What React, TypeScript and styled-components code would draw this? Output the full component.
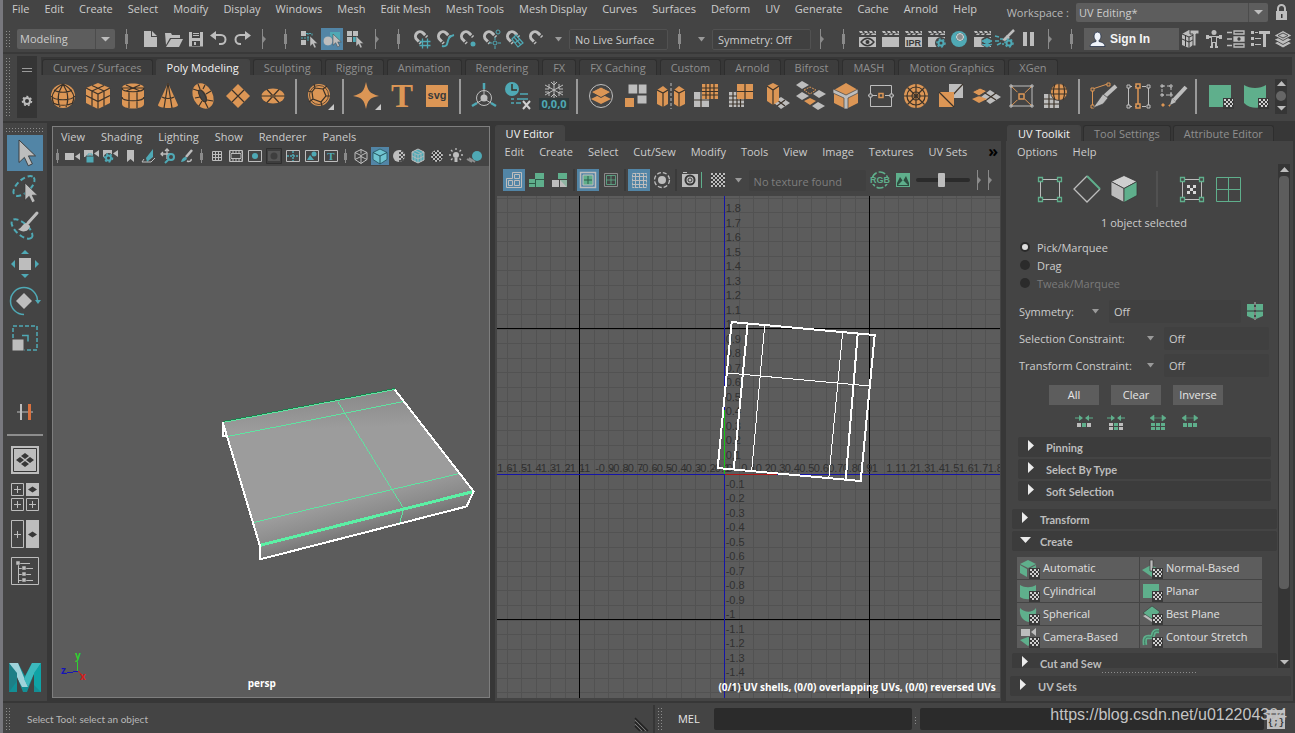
import React from "react";
import styled, { createGlobalStyle } from "styled-components";

/* ---------- palette ---------- */
const G = "#bdbdbd";
const T = "#4fa9b5";
const O = "#dc9655";
const N = "#5faf8c";
const D = "#373737";
const BG = "#444444";

const GlobalStyle = createGlobalStyle`
  * { box-sizing: border-box; }
  body {
    margin: 0;
    background: ${BG};
    color: #cccccc;
    font: 11px/16px "Open Sans", "Noto Sans", sans-serif;
    overflow: hidden;
  }
  button, input, select { font: inherit; color: inherit; }
`;

/* ---------- shared parts ---------- */
const App_ = styled.div`
  height: 100vh;
  min-height: 600px;
  display: flex;
  flex-direction: column;
  border-left: 3px solid #77777d;
`;

const dots = `
  repeating-linear-gradient(${BG} 0 2px, transparent 2px 3px),
  repeating-linear-gradient(90deg, #8c8c8c 0 1px, ${BG} 1px 3px)
`;

const Grip = styled.span<{ $w?: number; $h?: number }>`
  flex: none;
  width: ${(p) => p.$w ?? 4}px;
  height: ${(p) => p.$h ?? 20}px;
  margin: ${(p) => (p.$w ? "0" : "0 0 0 2px")};
  background: ${dots};
`;

const MenuList = styled.nav<{ $pad: number; $h: number; $gap: number }>`
  display: flex;
  align-items: center;
  gap: ${(p) => p.$gap}px;
  height: ${(p) => p.$h}px;
  flex: none;
  padding-left: ${(p) => p.$pad}px;
`;

const MenuButton = styled.button`
  border: 0;
  padding: 0;
  background: none;
  white-space: nowrap;
`;

const MoreButton = styled(MenuButton)`
  margin: 0 3px 2px auto;
  color: #000000;
  font: bold 16px/16px "Open Sans", sans-serif;
`;

const Tool = styled.button<{ $w?: number; $h?: number; $on?: boolean }>`
  flex: none;
  display: flex;
  align-items: center;
  justify-content: center;
  width: ${(p) => p.$w ?? 22}px;
  height: ${(p) => p.$h ?? 22}px;
  padding: 0;
  border: 0;
  background: ${(p) => (p.$on ? "#5285a6" : "none")};
`;

const Svg = styled.svg`
  display: block;
  flex: none;
  overflow: visible;
`;

const HandleBox = styled.span<{ $w: number }>`
  flex: none;
  display: flex;
  justify-content: center;
  width: ${(p) => p.$w}px;
`;

const Handle = ({ w = 22, s = 20 }: { w?: number; s?: number }) => (
  <HandleBox $w={w}>
    <Svg width="4" height={s} viewBox={`0 0 4 ${s}`} shapeRendering="crispEdges">
      <path d={`M1.500 0V${s}`} stroke="#8a8a8a" />
      <rect x="0" y={s / 4} width="3" height={s / 2} fill="#8a8a8a" />
    </Svg>
  </HandleBox>
);

const Collapse = ({ w = 20 }: { w?: number }) => (
  <Tool $w={w} aria-label="Collapse section">
    <Svg width="5" height="20" viewBox="0 0 5 20">
      <path d="M.5 0V20" stroke="#8a8a8a" />
      <path d="M0 6l4 4-4 5z" fill="#8a8a8a" />
    </Svg>
  </Tool>
);

const Caret = ({ w = 7, c = "#9a9a9a" }: { w?: number; c?: string }) => (
  <Svg width={w} height="5" viewBox="0 0 7 5" preserveAspectRatio="none">
    <path d="M0 0h7L3.500 4.500z" fill={c} />
  </Svg>
);

const SelectBox = styled.span<{ $grow?: boolean }>`
  display: grid;
  grid-template-columns: 1fr 20px;
  align-items: center;
  justify-items: center;
  width: ${(p) => (p.$grow ? 192 : 98)}px;
  height: ${(p) => (p.$grow ? 19 : 20)}px;
  background: #5d5d5d;
  border-radius: 2px;
  flex: none;
  select {
    grid-area: 1 / 1 / 2 / 3;
    justify-self: stretch;
    height: 100%;
    min-width: 0;
    appearance: none;
    border: 0;
    padding: 0 3px;
    background: none;
  }
  svg {
    grid-area: 1 / 2;
    pointer-events: none;
  }
  &::after {
    content: "";
    grid-area: 1 / 2;
    justify-self: start;
    width: 1px;
    height: 100%;
    background: #4c4c4c;
  }
`;

/* ---------- header ---------- */
const Header = styled.header`
  display: flex;
  justify-content: space-between;
  height: 25px;
  flex: none;
`;
const Workspace = styled.div`
  display: flex;
  align-items: center;
  gap: 7px;
  height: 22px;
  padding: 3px 7px 0 0;
  label { color: #b8b8b8; }
`;

/* ---------- status line ---------- */
const StatusLine = styled.div`
  display: flex;
  align-items: center;
  gap: 1px;
  height: 29px;
  flex: none;
  padding: 1px 3px 0 1px;
  border-bottom: 2px solid #393939;
  > ${SelectBox} { margin-left: 6px; }
`;
const LineField = styled.input`
  width: 99px;
  height: 21px;
  flex: none;
  padding: 0 5px;
  border: 1px solid #515151;
  border-radius: 2px;
  background: #404040;
`;
const SignIn = styled.button`
  display: flex;
  align-items: center;
  gap: 4px;
  width: 95px;
  height: 22px;
  flex: none;
  padding: 0 5px;
  border: 0;
  background: #5d5d5d;
  color: #f4f4f4;
  font: bold 12px "Liberation Sans", sans-serif;
`;
const Spacer = styled.span`flex: 1;`;

/* ---------- shelf ---------- */
const Shelf = styled.section`
  display: flex;
  height: 67px;
  flex: none;
  padding: 2px 3px 3px 1px;
  gap: 4px;
`;
const ShelfSide = styled.div`
  display: flex;
  flex-direction: column;
  align-items: center;
  justify-content: space-around;
  width: 20px;
  margin-left: 3px;
  background: #353535;
`;
const ShelfBody = styled.div`
  flex: 1;
  min-width: 0;
  padding-top: 1px;
`;
const TabBar = styled.div<{ $h: number; $pad: number; $gap?: number }>`
  display: flex;
  align-items: flex-end;
  gap: ${(p) => p.$gap ?? 2}px;
  height: ${(p) => p.$h}px;
  flex: none;
  padding-left: ${(p) => p.$pad}px;
  background: ${D};
`;
const Tab = styled.button<{ $on?: boolean }>`
  height: 16px;
  padding: 0 10px;
  border: 1px solid ${(p) => (p.$on ? BG : "#2e2e2e")};
  border-bottom: 0;
  border-radius: 3px 3px 0 0;
  background: ${(p) => (p.$on ? BG : "#3d3d3d")};
  color: ${(p) => (p.$on ? "#f2f2f2" : "#8f8f8f")};
  line-height: 15px;
  white-space: nowrap;
`;
const ShelfIcons = styled.div`
  display: flex;
  align-items: center;
  height: 42px;
  padding-left: 4px;
`;
const ShelfRule = styled.span`
  width: 2px;
  height: 35px;
  margin: 0 5px;
  flex: none;
  background: #9a9a9a;
`;
const ShelfScroll = styled.div`
  display: flex;
  flex-direction: column;
  align-items: center;
  justify-content: space-around;
  width: 12px;
  height: 35px;
  margin: 0 5px 0 auto;
  background: #363636;
`;

/* ---------- workspace body ---------- */
const Body = styled.main`
  flex: 1;
  min-height: 0;
  display: flex;
  gap: 5px;
  background: ${D};
  border-top: 2px solid ${D};
`;
const ToolBox = styled.aside`
  display: flex;
  flex-direction: column;
  align-items: center;
  gap: 1px;
  width: 44px;
  padding-top: 3px;
  flex: none;
  background: ${BG};
`;
const ToolRule = styled.hr`
  width: 36px;
  height: 2px;
  margin: 3px 0 5px;
  border: 0;
  background: #8d8d8d;
`;
const Slot = styled.div`height: 36px; flex: none;`;
const Viewport = styled.section`
  flex: 437;
  min-width: 0;
  display: flex;
  flex-direction: column;
  margin: 3px 0;
  border: 1px solid #7e7e7e;
  background: ${BG};
`;
const ViewTools = styled.div`
  display: flex;
  align-items: center;
  gap: 1px;
  height: 20px;
  flex: none;
`;
const Scene = styled.svg`
  display: block;
  flex: 1;
  width: 100%;
  min-height: 0;
  background: #5c5c5c;
`;
const Panel = styled.section<{ $f: number }>`
  flex: ${(p) => p.$f};
  min-width: 0;
  display: flex;
  flex-direction: column;
  margin-top: 2px;
  background: ${BG};
`;
const UvFoot = styled.div`
  flex: 1;
  min-height: 0;
  display: flex;
  padding: 0 1px 3px 2px;
`;
const UvTools = styled.div`
  display: flex;
  align-items: center;
  gap: 1px;
  height: 34px;
  flex: none;
  padding: 2px 6px 0 8px;
`;
const Rule = styled.span`
  width: 2px;
  height: 22px;
  margin: 0 1px;
  flex: none;
  background: #3a3a3a;
`;
const TextureField = styled.input`
  flex: 1;
  min-width: 60px;
  height: 21px;
  padding: 2px 5px 0;
  margin-right: 2px;
  border: 0;
  border-radius: 2px;
  background: #404040;
  &::placeholder { color: #7e7e7e; opacity: 1; }
`;
const Slider = styled.input`
  width: 54px;
  height: 16px;
  margin: 0 3px 0 1px;
  flex: none;
  appearance: none;
  background: none;
  &::-webkit-slider-runnable-track { height: 4px; border-radius: 2px; background: #2b2b2b; }
  &::-webkit-slider-thumb {
    appearance: none;
    width: 7px;
    height: 14px;
    margin-top: -5px;
    border-radius: 1px;
    background: ${G};
  }
`;

/* ---------- UV toolkit ---------- */
const Kit = styled(Panel)`
  flex: none;
  width: 287px;
  margin-right: 2px;
`;
const KitBody = styled.div`
  flex: 1;
  min-height: 0;
  display: flex;
`;
const KitScroll = styled.div`
  flex: 1;
  min-width: 0;
  overflow: hidden;
  padding-left: 6px;
`;
const ModeRow = styled.div`
  display: flex;
  align-items: center;
  height: 52px;
  padding: 2px 0 0 19px;
  i { width: 2px; height: 36px; margin: 0 15px 0 14px; background: #515151; }
`;
const SelInfo = styled.p`
  margin: 1px 2px 8px 0;
  text-align: center;
`;
const Radio = styled.label<{ $off?: boolean }>`
  display: flex;
  align-items: center;
  gap: 7px;
  height: 18px;
  padding-left: 8px;
  color: ${(p) => (p.$off ? "#7a7a7a" : "inherit")};
  input {
    appearance: none;
    width: 10px;
    height: 10px;
    margin: 0 0 2px;
    border-radius: 5px;
    background: #2b2b2b;
  }
  input:checked { border: 2px solid #2b2b2b; background: #dddddd; }
`;
const Constraints = styled.div`
  display: flex;
  flex-direction: column;
  gap: 4px;
  padding: 7px 9px 0 7px;
`;
const FieldRow = styled.div`
  display: flex;
  align-items: center;
  height: 23px;
  input {
    flex: 1;
    min-width: 0;
    height: 23px;
    margin-left: 8px;
    padding: 0 5px;
    border: 0;
    border-radius: 2px;
    background: #404040;
  }
`;
const FieldLabel = styled.label<{ $w: number }>`width: ${(p) => p.$w}px;`;
const PushRow = styled.div`
  display: flex;
  gap: 12px;
  padding: 8px 0 0 37px;
`;
const Push = styled.button`
  width: 50px;
  height: 20px;
  padding: 0;
  border: 0;
  background: #5d5d5d;
  color: #e6e6e6;
`;
const GrowRow = styled.div`
  display: flex;
  gap: 10px;
  padding: 10px 0 6px 61px;
  i { width: 0; }
`;
const Fold = styled.button<{ $sub?: boolean; $wide?: boolean }>`
  display: flex;
  align-items: center;
  gap: 9px;
  width: calc(100% - ${(p) => (p.$sub ? 13 : p.$wide ? 6 : 1)}px);
  height: 20px;
  margin: 0 0 2px ${(p) => (p.$sub ? 6 : p.$wide ? 4 : 0)}px;
  padding: 0 0 0 8px;
  border: 0;
  border-radius: 2px;
  background: #3c3c3c;
  font: bold 11px/16px Lato, sans-serif;
  color: #bdbdbd;
  flex: none;
  svg { margin-bottom: 4px; }
  span { padding-top: 2px; }
`;
const SubFolds = styled.div`padding-bottom: 6px;`;
const CreateGrid = styled.div`
  display: grid;
  grid-template-columns: 1fr 1fr;
  gap: 1px;
  padding: 4px 16px 5px 5px;
`;
const CreateButton = styled.button`
  display: flex;
  align-items: center;
  gap: 4px;
  height: 22px;
  padding: 0 2px;
  border: 0;
  background: #5d5d5d;
  color: #e0e0e0;
  white-space: nowrap;
`;
const ScrollTrack = styled.div`
  display: flex;
  flex-direction: column;
  align-items: center;
  width: 12px;
  margin: 2px 3px 0 0;
  padding: 3px 0;
  gap: 4px;
  background: #353535;
`;
const ScrollThumb = styled.span`
  width: 10px;
  flex: 425;
  border-radius: 4px;
  background: #5d5d5d;
`;
const ScrollRest = styled.span`flex: 65;`;
const DotRow = styled.div`
  width: 96px;
  height: 3px;
  margin: 2px 0 3px 96px;
  flex: none;
  background: ${dots};
`;
const FoldFoot = styled.div`height: 3px; flex: none;`;

/* ---------- footer ---------- */
const Footer = styled.footer`
  position: relative;
  display: flex;
  align-items: center;
  height: 32px;
  flex: none;
  padding: 2px 7px 0 1px;
  border-top: 2px solid ${D};
`;
const HelpLine = styled.div`
  flex: 648;
  display: flex;
  align-items: center;
  gap: 17px;
  height: 28px;
  margin-right: 1px;
  padding-right: 5px;
  border-right: 2px solid #363636;
  font: 10px/14px Lato, sans-serif;
  color: #b8b8b8;
`;
const CommandLine = styled.div`
  flex: 636;
  display: flex;
  align-items: center;
`;
const MelButton = styled.button`
  padding: 0;
  margin: 0 14px 0 16px;
  border: 0;
  background: none;
  color: #e8e8e8;
`;
const Command = styled.input<{ $f: number }>`
  flex: ${(p) => p.$f};
  min-width: 0;
  height: 22px;
  border: 0;
  border-radius: 2px;
  background: #2b2b2b;
`;
const CommandGap = styled.span`
  width: 1px;
  height: 9px;
  margin: 0 4px 0 3px;
  background: ${dots};
`;
const Watermark = styled.a`
  position: absolute;
  right: 8px;
  top: 2px;
  font: 16px/20px "Liberation Sans", sans-serif;
  color: #c4c4c4;
  text-decoration: none;
`;

/* ---------- icon pieces ---------- */
const Check = ({ x, y }: { x: number; y: number }) => (
  <g transform={`translate(${x} ${y})`} shapeRendering="crispEdges">
    <path d="M-1-1h11v11H-1z" fill="#3a3a3a" />
    <path d="M0 0h2v2H0zM4 0h2v2H4zM2 2h2v2H2zM6 2h2v2H6zM0 4h2v2H0zM4 4h2v2H4zM2 6h2v2H2zM6 6h2v2H6zM8 0h1v2H8zM8 4h1v2H8z" fill="#d0d0d0" />
  </g>
);
const Cursor = ({ x, y, s = 1 }: { x: number; y: number; s?: number }) => (
  <path
    transform={`translate(${x} ${y}) scale(${s})`}
    d="M0 0v15l3.600-3.400 2.600 5.600 2.700-1.300-2.600-5.300H11z"
    fill={G}
    stroke={D}
    strokeWidth=".6"
  />
);
const Corner = () => <path d="M30 24v6h-6z" fill="#c8c8c8" />;
const Magnet = () => (
  <g transform="rotate(-45 9 9)" fill="none">
    <path d="M5 14V8.500a4.500 4.500 0 0 1 9 0V14" stroke={G} strokeWidth="3" />
    <path d="M3 12h4M12 12h4" stroke={BG} strokeWidth="1.200" />
  </g>
);
const Clap = () => (
  <g>
    <path d="M3 9h17v10H3z" fill={G} />
    <path d="M3 3h3l1 2H4zM8 3h3l1 2H9zM13 3h3l1 2h-3zM18 3h2v2h-1zM3 7h2l1-1.500h3L8 7zM10 7l1-1.500h3L13 7zM15 7l1-1.500h4V7z" fill={G} />
  </g>
);
const Gear = ({ x, y, r = 3.5, c = T }: { x: number; y: number; r?: number; c?: string }) => (
  <g transform={`translate(${x} ${y})`} fill="none" stroke={c}>
    <circle r={r} strokeWidth="2" />
    <circle r={r + 1.5} strokeWidth="1.500" strokeDasharray="2 2" />
  </g>
);
const CamShape = ({ y = 5 }: { y?: number }) => (
  <path d={`M1 ${y}h9v7H1zM11 ${y + 3.5}l5-3.500v7z`} fill={G} />
);

/* ---------- status line drawings, 22 x 22 ---------- */
const st: Record<string, React.ReactNode> = {
  file: <path d="M5 3h7v6h6v10H5zM13 3l5 5h-5z" fill={G} />,
  open: <path d="M3 5h6l1 2h8v3H8l-4 7zM9 11h12l-4 8H4z" fill={G} />,
  save: (
    <g>
      <path d="M4 4h14v14.500H4z" fill={G} />
      <path d="M7 4h8v6H7zM7 13h8v5H7z" fill={BG} />
      <path d="M8 5h6v1H8zM8 7h6v1H8zM9 14h2v3H9z" fill={G} />
    </g>
  ),
  undo: <path d="M8 3v3h5a5.500 5.500 0 0 1 0 11h-2v-2h2a3.500 3.500 0 0 0 0-7H8v4L2 7.500z" fill={G} />,
  redo: <path d="M14 3v3H9a5.500 5.500 0 0 0 0 11h1v-2H9a3.500 3.500 0 0 1 0-7h5v4l6-4.500z" fill={G} />,
  selH: (
    <g>
      <path d="M3 3h5v5H3zM3 12h5v5H3z" fill={G} />
      <path d="M8 5.500h6v3M10 5v9M3 10h10" fill="none" stroke={T} strokeDasharray="2 1" />
      <Cursor x={12} y={8} s={0.7} />
    </g>
  ),
  selO: (
    <g>
      <path d="M9 4h10v9H9z" fill={T} />
      <circle cx="7" cy="13" r="5" fill={G} stroke="#5285a6" />
      <Cursor x={12} y={6} s={0.75} />
    </g>
  ),
  selC: (
    <g>
      <path d="M3 3h5v5H3zM9 3h5v5H9zM3 9h5v5H3z" fill={G} />
      <path d="M9 9h5v5H9z" fill={T} />
      <Cursor x={12} y={8} s={0.7} />
    </g>
  ),
  magGrid: <g><Magnet /><path d="M8.500 13.500h11M8.500 17.500h11M11.500 10.500v10M16.500 10.500v10" stroke={T} strokeWidth="1.300" /></g>,
  magCurve: <g><Magnet /><path d="M8 18c9 2 2-9 12-11" fill="none" stroke={T} strokeWidth="2" /></g>,
  magPoint: <g><Magnet /><circle cx="16" cy="16" r="2.500" fill={T} /></g>,
  magProj: <g><Magnet /><circle cx="18" cy="4" r="2" fill="none" stroke={T} /><circle cx="15" cy="15" r="2" fill="none" stroke={T} /><path d="M15 9v3M15 18v3M9 15h3M18 15h3" stroke={T} /></g>,
  magPlane: <g><Magnet /><path d="M9 11l4-4 7 8-5 4zM11 9l7 8M12 15l5-4" fill="none" stroke={T} strokeWidth="1.200" /></g>,
  magLive: <Magnet />,
  rView: (
    <g>
      <Clap />
      <path d="M5 14c4-5 9-5 13 0-4 5-9 5-13 0z" fill={G} stroke={D} strokeWidth="1.300" />
      <circle cx="11.500" cy="14" r="2" fill={D} />
    </g>
  ),
  rFrame: <Clap />,
  rIpr: (
    <g>
      <Clap />
      <text x="11.500" y="18" textAnchor="middle" fontFamily="Liberation Sans" fontWeight="700" fontSize="9" fill={D}>IPR</text>
    </g>
  ),
  rSet: <g><Clap /><circle cx="16" cy="15" r="6" fill={BG} /><Gear x={16} y={15} r={2.5} /></g>,
  rBall: (
    <g>
      <circle cx="11" cy="11" r="8" fill={T} />
      <circle cx="12" cy="9" r="4" fill={BG} />
      <circle cx="12" cy="9" r="3.500" fill="#8d8d8d" stroke="#d5e6e8" strokeWidth="1" />
    </g>
  ),
  rLayer: <g><Clap /><path d="M15.500 8l6 3v6l-6 3-5-3v-6z" fill={BG} /><path d="M11 13l5-2.500 5 2.500-5 3zM11 16l5 3 5-3" fill={T} stroke={T} /></g>,
  rLight: (
    <g>
      <path d="M20 2l-7 7" stroke={G} strokeWidth="2.500" />
      <path d="M13 7l3 3-5 3-3-1z" fill={G} />
      <path d="M1 8l4 1M1 13h4M6 11h3M3 17l4-2M8 16h2" stroke={T} strokeWidth="1.500" />
      <Gear x={15} y={15} r={2.5} />
    </g>
  ),
  pause: <path d="M6 4h4v14H6zM13 4h4v14h-4z" fill={G} />,
  cubeTool: (
    <g>
      <path d="M2 6l7-4 8 1v3l-4 1v10l-4 3-7-3z" fill={G} />
      <path d="M2 6l7 3 7-3M9 9v11M2 11l7 3 4-2M5.500 7.500v11" fill="none" stroke={D} />
      <path d="M10 2h9v4h-3v12h-3V6h-3z" fill={G} stroke={BG} />
    </g>
  ),
  human: (
    <g>
      <circle cx="11" cy="4.500" r="2.500" fill={G} />
      <path d="M3 9h16M9 9v11M13 9v11" stroke={G} strokeWidth="2" />
      <path d="M3 7h3v4H3zM16 7h3v4h-3zM7 18h3v2H7zM12 18h3v2h-3z" fill={G} />
      <path d="M8.500 8.500h5v6h-5z" fill={BG} stroke={G} />
    </g>
  ),
  attr: (
    <g fill="none" stroke={G} strokeWidth="1.300">
      <path d="M8 3h10v3H8zM8 16h10v3H8z" />
      <path d="M8 9h10v4H8z" fill={G} />
      <path d="M1 4.500h5M1 11h5M1 17.500h5" />
      <circle cx="13" cy="11" r="1" stroke={D} />
    </g>
  ),
  toolS: (
    <g>
      <path d="M10 3h11v3h-4v13h-3V6h-4z" fill={G} />
      <path d="M2 3h3v3H2zM2 9h3v3H2zM2 15h3v3H2z" fill={G} />
      <path d="M6 10.500h6M6 16.500h6M6 4.500h3" stroke={G} />
    </g>
  ),
  layers: (
    <g fill={G} stroke={D} strokeWidth=".8">
      <path d="M2 15l9-4 9 4-9 5z" />
      <path d="M2 11.500l9-4 9 4-9 5z" />
      <path d="M2 7.500l9-5 9 5-9 5z" />
      <path d="M6 7.500l5-2.500 5 2.500-5 2.500z" fill="none" />
    </g>
  ),
};

/* ---------- shelf drawings, 32 x 32 ---------- */
const dk = { stroke: "#3b3229", strokeWidth: 1.2, fill: "none" };
const shelf: Record<string, React.ReactNode> = {
  sphere: <g><circle cx="16" cy="16" r="12" fill={O} /><path d="M7 10c4 3 14 3 18 0M4 16c4 5 20 5 24 0M6 23c5 3 15 3 20 0M16 4c-5 3-8 6-9 8-3 4-2 8 0 12M16 4c5 3 8 6 9 8 3 4 2 8 0 12M12 12c-1 5-1 11 1 15M20 12c1 5 1 11-1 15M16 4l-4 8M16 4l4 8" {...dk} /></g>,
  cube: <g><path d="M16 3l12 5v15l-12 6-12-6V8z" fill={O} /><path d="M4 8l12 6 12-6M16 14v15M10 11v15M22 11v15M4 15.500l12 6 12-6M10 5.500l12 5.500M22 5.500L10 11" {...dk} /></g>,
  cylinder: <g><path d="M5 8c0-6 22-6 22 0v16c0 6-22 6-22 0z" fill={O} /><path d="M5 8c0 5 22 5 22 0M5 17c0 5 22 5 22 0M12 12v16M20 12v16M9 5l14 6M23 5L9 11M5 8h22" {...dk} /></g>,
  cone: <g><path d="M16 3l10 22c0 4-20 4-20 0z" fill={O} /><path d="M16 3l-4 25M16 3l4 25M10 17c3 2 9 2 12 0" {...dk} /></g>,
  torus: <g><ellipse cx="16" cy="16" rx="6.500" ry="10" transform="rotate(-28 16 16)" fill="none" stroke={O} strokeWidth="6.500" /><ellipse cx="15.500" cy="15.500" rx="2.500" ry="6.500" transform="rotate(-28 16 16)" fill={BG} stroke="#3b3229" /><path d="M11 4l2 5M6 9l6 2M8 18l5-1M12 26l3-5M21 28l-3-6M26 21l-6-1M24 11l-5 3M18 5l-2 4" {...dk} /></g>,
  plane: <g><path d="M16 4l12 12-12 12L4 16z" fill={O} /><path d="M10 10l12 12M22 10L10 22" {...dk} /></g>,
  disc: <g><ellipse cx="16" cy="16" rx="11.500" ry="7.500" fill={O} /><path d="M4 16h24M10 9.500l12 13M22 9.500l-12 13" {...dk} /><ellipse cx="16" cy="16" rx="3" ry="1.500" fill="#6d5238" /></g>,
  platonic: <g><circle cx="15" cy="15" r="11" fill={O} /><path d="M11 8l8 1 3 7-5 6-8-3-1-7zM11 8l-1-4M19 9l4-3M22 16h4M17 22l1 4M9 19l-4 3M8 12l-4-1" {...dk} /><circle cx="15" cy="15" r="9.500" {...dk} strokeWidth={0.8} /><Corner /></g>,
  star: <g><path d="M15 2c2 9 3 11 13 14-10 2-11 4-13 13-2-9-3-11-13-13 10-3 11-5 13-14z" fill={O} /><Corner /></g>,
  type: <text x="16" y="27" textAnchor="middle" fontFamily="Liberation Serif" fontWeight="700" fontSize="33" fill={O}>T</text>,
  svg: <g><path d="M5 5h22v22H5z" fill={O} /><text x="16" y="19" textAnchor="middle" fontFamily="Liberation Sans" fontWeight="700" fontSize="11" fill="#3a3a3a">svg</text></g>,
  pivot: <g fill="none"><circle cx="16" cy="18" r="7.500" stroke={G} /><circle cx="16" cy="18" r="3.500" fill={G} /><path d="M16 3v6M4 26l5-3M28 26l-5-3" stroke={T} strokeWidth="2.500" /><path d="M16 9v7M9 23l5-3M23 23l-5-3" stroke={G} /></g>,
  history: <g><circle cx="9" cy="9" r="7" fill={T} /><path d="M9 4v6h5" {...dk} strokeWidth={1.5} /><path d="M17 14h8M8 19h3M14 19h11M8 23h3M13 23h5" stroke={T} strokeWidth="1.500" /><path d="M20 21l7 8M27 21l-7 8" stroke="#d0d0d0" strokeWidth="2" /></g>,
  freeze: <g><path d="M1 18h30v12H1z" fill="#303a3c" /><path d="M16 1v17M7 5l18 10M25 5L7 15M13 2l3 3 3-3M13 17l3-3 3 3M7 9h4V4M25 9h-4V4M7 12h4v4M25 12h-4v4" fill="none" stroke={G} /><text x="16" y="28" textAnchor="middle" fontFamily="Open Sans" fontWeight="700" fontSize="11" fill={T}>0,0,0</text></g>,
  combine: <g><circle cx="16" cy="16" r="11.500" fill="none" stroke={G} /><path d="M6 19l10-5 10 5-10 5z" fill={O} /><path d="M6 12l10-5 10 5-10 5.500z" fill={O} stroke={BG} /></g>,
  separate: <g><path d="M8 4h10v10H8zM18 4h9v10h-9zM17 15h10v9H17z" fill={G} stroke={BG} /><path d="M5 18h9v9H5z" fill={O} /></g>,
  mirror: <g><path d="M2 10l6-4 5 4v14l-5 3-6-3zM19 10l5-4 6 4v14l-6 3-5-3z" fill={O} /><path d="M2 10l6 3 5-3M8 13v14M19 10l5 3 6-3M24 13v14" {...dk} /><path d="M16 3v26" stroke={G} strokeDasharray="3 2" /></g>,
  smooth: <g><path d="M4 12h15v15H4z" fill={G} /><path d="M4 20h15M11 12v15" {...dk} /><path d="M12 4h16v15H12z" fill={O} /><path d="M12 8h16M12 11.500h16M12 15h16M16 4v15M20 4v15M24 4v15" {...dk} /></g>,
  reduce: <g><path d="M4 12h15v15H4z" fill={G} /><path d="M4 16h15M4 20h15M4 24h15M8 12v15M12 12v15M15.500 12v15" {...dk} /><path d="M12 4h16v15H12z" fill={O} /><path d="M12 11.500h16M20 4v15" {...dk} /></g>,
  extrude: <g><path d="M13 22l8-5 9 6-9 6z" fill={G} /><path d="M17 20l8 6M17 26l8-6" {...dk} /><path d="M7 6l6-3 6 3v15l-6 4-6-4z" fill={O} /><path d="M7 6l6 4 6-4M13 10v15" {...dk} /></g>,
  bridge: <g><path d="M1 6l6-4 7 4-7 4zM1 17l6-4 7 4-7 4zM17 27l6-4 7 4-7 4zM18 15l6-4 7 4-7 4z" fill={G} transform="translate(0 -1)" /><path d="M9 21l6-3 6 3-6 4z" fill={O} /><path d="M9 10l6-3 6 3-6 4z" fill="none" stroke={O} strokeDasharray="2 1" /></g>,
  bevel: <g><path d="M16 3l12 7v13l-12 6-12-6V10z" fill={O} /><path d="M3 9l13 6 12-6v4l-10 5v11h-4V18L3 13z" fill={G} stroke={BG} strokeWidth=".7" /></g>,
  loop: <g fill="none"><path d="M5.500 5.500h21v21h-21zM3 15.500h26" stroke={G} /><path d="M12 12h8v8h-8z" fill={BG} /><path d="M14 13.500h4v4h-4z" stroke={O} strokeWidth="1.500" /><path d="M4 14h3v3H4zM25 14h3v3h-3z" fill={BG} stroke={G} /></g>,
  circular: <g><circle cx="16" cy="16" r="12" fill={O} /><circle cx="16" cy="16" r="9" {...dk} /><circle cx="16" cy="16" r="4" {...dk} /><path d="M16 4v24M4 16h24M7.500 7.500l17 17M24.500 7.500l-17 17" {...dk} /></g>,
  duplicate: <g><path d="M14 4h14v14H14z" fill={G} /><path d="M28 4L15 18" {...dk} /><path d="M4 12h15v15H4z" fill={O} /><path d="M4 12l15 15" {...dk} /></g>,
  stack: <g><path d="M11 17l9-7 11 7-11 7z" fill={G} /><path d="M15 13l11 7M26 13l-11 8" {...dk} /><path d="M2 19l7-3 8 3-8 4z" fill={O} /><path d="M2 12l8-4 7 3-8 5z" fill={O} stroke={BG} /></g>,
  quad: <g fill="none"><path d="M6 6h21v20H6z" stroke={G} /><path d="M6 6l21 20M27 6L6 26" stroke={O} /><path d="M12.500 12.500h7v7h-7z" fill={BG} stroke={BG} /><path d="M14 14h5v5h-5z" stroke={O} strokeWidth="1.500" /><path d="M5 5h2v2H5zM26 5h2v2h-2zM5 25h2v2H5zM26 25h2v2h-2z" stroke={G} /></g>,
  project: <g><path d="M4 14h15v14H4z" fill={G} /><path d="M4 19h15M4 24h15M9 14v14M14 14v14" {...dk} /><circle cx="19" cy="12" r="8.500" fill={O} stroke={BG} /><path d="M11 9h16M11 14h16M19 4v16M15 4c-2 5-2 11 0 16M23 4c2 5 2 11 0 16" {...dk} /></g>,
  cut: <g fill="none"><path d="M5.500 27V9l15-5" stroke={O} /><path d="M4 8h3v3H4zM20 3h3v3h-3zM4 25h3v3H4z" fill={BG} stroke={O} /><path d="M29 6L18 16" stroke={G} strokeWidth="4" /><path d="M16 14l5 4-5 6-10 4z" fill={G} stroke={BG} strokeWidth=".7" /></g>,
  edit: <g fill="none"><path d="M6.500 6v21M26.500 6v21" stroke={G} /><path d="M6 6.500h21M6 26.500h21" stroke={G} strokeDasharray="4 3" /><path d="M16 6v20" stroke={O} strokeWidth="1.500" /><path d="M14 4h4v4h-4zM14 24h4v4h-4z" fill={BG} stroke={O} strokeWidth="1.500" /><path d="M5 5h3v3H5zM25 5h3v3h-3zM5 25h3v3H5zM25 25h3v3h-3z" fill={BG} stroke={G} /></g>,
  draw: <g fill="none"><path d="M5 6h9v9H5z" stroke={G} strokeDasharray="3 2" /><path d="M4 5h2v2H4zM13 5h2v2h-2zM4 14h2v2H4zM13 14h2v2h-2z" stroke={G} /><path d="M29 7L17 20" stroke={G} strokeWidth="4" /><path d="M15 18l4 4-6 3z" fill={G} /><path d="M5 24h2v2H5zM12 25h1v1h-1z" fill={O} stroke={O} /></g>,
  planar: <g><path d="M5 5h22v22H5z" fill={N} /><Check x={20} y={19} /></g>,
  cylUv: <g><path d="M5 5c6 4 16 4 22 0v20c-6 4-16 4-22-2z" fill={N} /><Check x={20} y={19} /></g>,
};
const shelfOrder = "sphere cube cylinder cone torus plane disc | platonic | star type svg | pivot history freeze | combine separate mirror smooth reduce extrude bridge bevel loop circular duplicate stack quad project | cut edit draw | planar cylUv".split(" ");

/* ---------- tool box drawings, 36 x 36 ---------- */
const boxFrame = <path d="M4.500 4.500h27v27h-27z" fill="none" stroke={G} />;
const tb: Record<string, React.ReactNode> = {
  select: <Cursor x={12} y={5} s={1.5} />,
  lasso: <g><ellipse cx="17" cy="14" rx="13" ry="6.500" transform="rotate(-42 17 14)" fill="none" stroke={T} strokeWidth="2" strokeDasharray="5 3" /><Cursor x={18} y={11} s={1.15} /></g>,
  paint: <g><ellipse cx="15" cy="20" rx="13" ry="6" transform="rotate(42 15 20)" fill="none" stroke={T} strokeWidth="2" strokeDasharray="5 3" /><path d="M30 4l-9 10" stroke={G} strokeWidth="3" strokeLinecap="round" /><path d="M11 20c4 0 4-6 9-6l3 3c-1 6-8 7-12 3z" fill={G} /></g>,
  move: <g><path d="M12 12h12v12H12z" fill={G} /><path d="M18 4l4 4h-8zM18 32l4-4h-8zM4 18l4-4v8zM32 18l-4-4v8z" fill={T} /></g>,
  rotate: <g><path d="M17 10l8 8-8 8-8-8z" fill={G} /><path d="M17 31.500A13.500 13.500 0 1 1 30.500 18" fill="none" stroke={T} strokeWidth="1.500" /><path d="M28 17h6l-3 4z" fill={T} /></g>,
  scale: <g><path d="M6 6h24v24H6z" fill="none" stroke={T} strokeWidth="1.500" strokeDasharray="4 2" /><path d="M15 15.500h6v6" fill="none" stroke={T} strokeWidth="1.500" /><path d="M5 19h12v12H5z" fill={G} stroke={BG} /></g>,
  soft: <g><path d="M10 18h16" stroke={G} /><path d="M13 10h2v16h-2z" fill={G} /><path d="M21 10h3v16h-3z" fill="#d9713f" /></g>,
  persp: <g><path d="M4 4h28v28H4z" fill={G} /><path d="M6.500 6.500h23v23h-23z" fill="none" stroke={D} /><path d="M18 11l4 3-4 3-4-3zM18 19l4 3-4 3-4-3zM13 15l4 3-4 3-4-3zM23 15l4 3-4 3-4-3z" fill={D} /></g>,
  four: <g fill="none" stroke={G}><path d="M4.500 4.500h12v12h-12zM4.500 19.500h12v12h-12zM19.500 19.500h12v12h-12zM7 10.500h7M10.500 7v7M7 25.500h7M10.500 22v7M22 25.500h7M25.500 22v7" /><path d="M19 4h13v13H19z" fill={G} stroke="none" /><path d="M21 10.500l4.500-3 4.500 3-4.500 3z" fill={D} stroke="none" /></g>,
  two: <g fill="none" stroke={G}><path d="M4.500 4.500h12v27h-12zM7 18.500h7M10.500 15v7" /><path d="M19 4h13v28H19z" fill={G} stroke="none" /><path d="M21 18.500l4.500-3 4.500 3-4.500 3z" fill={D} stroke="none" /></g>,
  outliner: <g>{boxFrame}<path d="M11.500 10v20M12 15.500h14M12 21.500h12M12 27.500h14M13 10.500h10" stroke={G} fill="none" /><path d="M9 8h4v4H9zM15 13h4v4h-4zM15 19h4v4h-4zM15 25h4v4h-4z" fill={G} stroke={BG} strokeWidth=".5" /></g>,
};

/* ---------- viewport tool drawings, 18 x 18 ---------- */
const checkerDots = (r: number, cx: number, cy: number, round = true) => {
  const out: React.ReactNode[] = [];
  for (let y = -r; y < r; y += 2)
    for (let x = -r; x < r; x += 2)
      if (((x + y) / 2) % 2 === 0 && (!round || (x + 1) ** 2 + (y + 1) ** 2 < r * r))
        out.push(<rect key={`${x},${y}`} x={cx + x} y={cy + y} width="2" height="2" />);
  return <g fill="#3a3a3a" shapeRendering="crispEdges">{out}</g>;
};
const frame18 = <path d="M2.500 3.500h13v11h-13z" fill="none" stroke={G} />;
const vp: Record<string, React.ReactNode> = {
  cam: <CamShape y={6} />,
  camLock: <g><CamShape y={3} /><path d="M3 9h8v7H3z" fill={T} stroke={BG} /><path d="M5 9V7h4v2" fill="none" stroke={T} /></g>,
  camAttr: <g><CamShape y={3} /><circle cx="6.500" cy="11" r="5" fill={BG} /><Gear x={6.5} y={11} r={2.5} /></g>,
  mark: <path d="M6 3h7v12l-3.500-3L6 15z" fill={G} />,
  plane: <g><path d="M6 11l7-9v8l-6 5z" fill={T} /><path d="M2 15h9l4-4M4 12l-2 3" fill="none" stroke={G} /></g>,
  pan: <g fill="none"><path d="M2 7h10M8 3v9M4 5L2 7l2 2M6 4l2-2 2 2" stroke={G} strokeWidth="1.300" /><circle cx="12" cy="10" r="3" stroke={T} strokeWidth="2" /><path d="M10 12l-4 4" stroke={T} strokeWidth="2" /></g>,
  grease: <g><path d="M14 3l-6 7" stroke={G} strokeWidth="2.500" /><path d="M3 15c1-4 3-5 5-5l1 2c-2 2-4 3-6 3z" fill={T} /><path d="M9 14c2 1 5 0 4-2" fill="none" stroke={G} strokeWidth="1.500" /></g>,
  grid: <path d="M4.500 4.500h9v9h-9zM7.500 4v10M10.500 4v10M4 7.500h10M4 10.500h10" fill="none" stroke={G} />,
  film: <g>{frame18}<path d="M2 5h14M2 13h14" stroke={G} strokeDasharray="2 1" /><path d="M4 6.500h10v5H4z" fill="none" stroke={G} /></g>,
  gate: <g>{frame18}<circle cx="9" cy="9" r="3" fill={T} /></g>,
  mask: <g><path d="M1.500 1.500h15v15h-15z" fill="#3e3e3e" stroke="#2f2f2f" /><path d="M3 4h12v10H3z" fill="#565656" /><circle cx="9" cy="9" r="3.500" fill="#3e3e3e" /></g>,
  field: <g>{frame18}<path d="M9 4v10M3 9h12" stroke={T} strokeWidth="1.500" strokeDasharray="2 1" /></g>,
  action: <g>{frame18}<circle cx="11" cy="7" r="2.500" fill={T} /><path d="M4 13l3-5 4 5z" fill={T} /></g>,
  title: <g>{frame18}<text x="9" y="13" textAnchor="middle" fontFamily="Liberation Serif" fontWeight="700" fontSize="11" fill={T}>T</text></g>,
  wire: <g fill="none" stroke={G}><path d="M9 2.500l6 3v7l-6 4-6-4v-7zM3 5.500l6 3 6-3M9 8.500v8M9 2.500v4M3 12.500l6-3 6 3" /></g>,
  shaded: <g><path d="M9 2l7 3.500v7L9 17l-7-4.500v-7z" fill="#6fc4d0" stroke="#22505a" strokeWidth=".8" /><path d="M2 5.500L9 9l7-3.500M9 9v8" fill="none" stroke="#22505a" /></g>,
  half: <g><circle cx="9" cy="9" r="6" fill={G} /><path d="M9 3a6 6 0 0 1 0 12z" fill="#4a4a4a" /><path d="M9 3h2v2H9zM11 5h2v2h-2zM9 7h2v2H9zM13 7h2v2h-2zM11 9h2v2h-2zM9 11h2v2H9zM13 11h1v1h-1z" fill={G} /></g>,
  tex: <g><path d="M9 2l6 3v8l-6 3-6-3V5z" fill={T} stroke={G} /><path d="M3 5l6 3 6-3M9 8v8M6 3.500l6 3M6 7v8M12 7v8M3 9l6 3 6-3" fill="none" stroke={G} strokeWidth=".8" /></g>,
  checker: <g><circle cx="9" cy="9" r="6" fill={G} />{checkerDots(6, 9, 9)}</g>,
  light: <g><circle cx="9" cy="8" r="3" fill={G} /><path d="M7.500 11h3v4h-3z" fill={G} /><path d="M9 1v2M2 8h2M14 8h2M4 3l1.500 1.500M14 3l-1.500 1.500M4 13l1.500-1.500M14 13l-1.500-1.500" stroke={G} strokeWidth="1.300" /></g>,
  shadow: <g><circle cx="11" cy="9" r="5" fill={T} /><path d="M1 12l5 3M3 11l6 4" stroke="#8d8d8d" strokeWidth="2" /></g>,
};
const vpOrder = "| cam camLock camAttr mark plane pan grease | grid film gate mask field action title | wire shaded half tex checker light shadow".split(" ");

/* ---------- UV editor drawings, 22 x 22 ---------- */
const uv: Record<string, React.ReactNode> = {
  wire: <g fill="none" stroke={G}><path d="M3.500 9.500h6v-6h9v15h-15z" /><path d="M5.500 11.500h4v5h-4zM11.500 11.500h5v5h-5zM11.500 5.500h5v4h-5z" /></g>,
  fill: <g><path d="M3 10h6V4h9v14H3z" fill={N} /><path d="M9.500 10v8M9 10.500h9M3 14.500h6" stroke="#2f5a48" /></g>,
  half: <g><path d="M3 10h6V4h9v14H3z" fill={N} /><path d="M3 10h8l7 8H3z" fill={G} /><path d="M3 10.500h15M10.500 10v8" stroke={BG} /><path d="M11 11h7v7z" fill="#8fb5a3" /></g>,
  border: <g fill="none"><path d="M3.500 3.500h15v15h-15z" stroke={G} strokeWidth="1.500" /><path d="M6 6h10v10H6z" fill={N} stroke={G} /><path d="M11 7v8M7 11h8" stroke="#2f5a48" /></g>,
  seam: <g fill="none"><path d="M4.500 4.500h13v13h-13z" stroke="#8b8b8b" /><path d="M6.500 6.500h9v9h-9zM11 6v10M6 11h10" stroke={N} strokeWidth=".8" /></g>,
  grid: <g fill="none" stroke={G}><path d="M4.500 4.500h14v14h-14z" strokeDasharray="3 1" /><path d="M7.500 4v15M11.500 4v15M15.500 4v15M4 7.500h15M4 11.500h15M4 15.500h15" /></g>,
  iso: <g><circle cx="11" cy="11" r="4" fill={G} /><circle cx="11" cy="11" r="7.500" fill="none" stroke={G} strokeWidth="1.300" strokeDasharray="4 2" /></g>,
  snap: <g><path d="M3 5h16v13H3z" fill={G} /><path d="M4 3.500h4" stroke={G} /><circle cx="11" cy="11" r="4.500" fill={G} stroke={D} strokeWidth="2" /><circle cx="11" cy="11" r="2" fill="none" stroke={D} /><path d="M22.500 3v16" stroke={N} /></g>,
  checker: <g><path d="M4 4h14v14H4z" fill={G} />{checkerDots(7, 11, 11, false)}</g>,
  rgb: <g><circle cx="11" cy="11" r="8" fill="none" stroke={N} strokeWidth="1.500" strokeDasharray="7 2" /><path d="M2 8h18v7H2z" fill={BG} /><text x="11" y="14" textAnchor="middle" fontFamily="Liberation Sans" fontWeight="700" fontSize="9" fill={N}>RGB</text></g>,
  image: <g><path d="M4 4h14v14H4z" fill={N} /><path d="M5 14l3-6 3 4 3-5 3 7v3H5z" fill="#2f4d40" /><path d="M6 16l5-5 5 5z" fill={N} /></g>,
};

/* ---------- toolkit drawings ---------- */
const kitCorner = (
  <g fill="none">
    <path d="M10 7.500h14M10 27.500h14M7.500 10v15M26.500 10v15" stroke={G} />
    <path d="M5.500 5.500h4v4h-4zM24.500 5.500h4v4h-4zM5.500 25.500h4v4h-4zM24.500 25.500h4v4h-4z" stroke={N} strokeWidth="1.300" />
  </g>
);
const kit: Record<string, React.ReactNode> = {
  uv: kitCorner,
  edge: <g fill="none" strokeWidth="1.300"><path d="M17 4L4 17l13 13 13-13" stroke={G} /><path d="M17 4l13 13" stroke={N} strokeWidth="2" /></g>,
  face: <g stroke={D} strokeWidth=".8"><path d="M17 3.500l13 6-13 7-13-7z" fill="#cfcfcf" /><path d="M4 9.500l13 7v14l-13-7z" fill={G} /><path d="M30 9.500l-13 7v14l13-7z" fill={N} /></g>,
  shell: <g>{kitCorner}<path d="M12 13h3v3h-3zM18 13h3v3h-3zM15 16h3v3h-3zM12 19h3v3h-3zM18 19h3v3h-3z" fill="#d8d8d8" /></g>,
  object: <path d="M4.500 5.500h24v24h-24zM16.500 5v24M4 17.500h24" fill="none" stroke={N} />,
};
const create: [string, React.ReactNode][] = [
  ["Automatic", <g><path d="M1 6l8-4 8 4-8 4z" fill={N} /><path d="M1 7l7 4v8l-7-4zM10 11l7-4v9l-7 3z" fill={N} /></g>],
  ["Normal-Based", <g><path d="M0 12l9-5 9 5-8 7z" fill={N} /><path d="M8 2h3v11H8z" fill={G} stroke={D} strokeWidth=".7" /></g>],
  ["Cylindrical", <path d="M1 4c5 3 11 3 16 0v12c-4 3-12 3-16 0z" fill={N} />],
  ["Planar", <path d="M1 3h16v14H1z" fill={N} />],
  ["Spherical", <path d="M1 4c5 5 12 5 16 0 1 7-2 13-7 14C4 17 0 12 1 4z" fill={N} />],
  ["Best Plane", <g><path d="M1 12l9-4 8 4-8 6z" fill={G} /><path d="M1 9l9-7 8 6-8 7z" fill={N} stroke={D} strokeWidth=".6" /></g>],
  ["Camera-Based", <g><path d="M1 13l8-3 8 3-8 6z" fill={N} /><path d="M2 2h9v7H2zM12 5l5-4v8z" fill={G} /></g>],
  ["Contour Stretch", <g fill="none"><path d="M3 18c-2-14 7-4 8-10 1-5 3-4 6-4" stroke={N} strokeWidth="4.500" /><path d="M3 18c-2-14 7-4 8-10 1-5 3-4 6-4" stroke="#3d6f5a" /></g>],
];
const Grow = ({ rows, out }: { rows: number; out?: boolean }) => (
  <Tool $w={22} $h={16} aria-label={out ? "Grow selection" : "Shrink selection"}>
    <Svg width="20" height="16" viewBox="-1 0 20 16">
      {out ? (
        <path d="M3 3h12M5 0L1 3l4 3zM13 0l4 3-4 3z" stroke={N} fill={N} strokeWidth=".6" />
      ) : (
        <g><path d="M0 3h6M12 3h6" stroke={N} /><path d="M4 0l4 3-4 3zM14 0l-4 3 4 3z" fill={N} /></g>
      )}
      {Array.from({ length: rows }, (_, r) =>
        [2, 7, 12].map((x) => (
          <rect key={`${r}${x}`} x={x} y={8 + r * 4} width="4" height={rows === 1 ? 4 : 3} fill={out || x === 7 ? N : G} />
        ))
      )}
    </Svg>
  </Tool>
);
const Tri = ({ open }: { open?: boolean }) => (
  <Svg width="11" height="11" viewBox="0 0 11 11">
    <path d={open ? "M0 3h11L5.500 9z" : "M2 0l6 5.500L2 11z"} fill="#ececec" />
  </Svg>
);

/* ---------- scenes ---------- */
const PerspScene = () => (
  <Scene viewBox="0 0 436 532" preserveAspectRatio="xMidYMid slice" role="img" aria-label="Perspective view">
    <defs>
      <linearGradient id="back" x1="0" y1="0" x2=".05" y2="1">
        <stop offset="0" stopColor="#858585" />
        <stop offset=".25" stopColor="#9c9c9c" />
        <stop offset="1" stopColor="#9c9c9c" />
      </linearGradient>
      <linearGradient id="front" gradientUnits="userSpaceOnUse" x1="300" y1="332" x2="311" y2="372">
        <stop offset="0" stopColor="#9c9c9c" />
        <stop offset=".5" stopColor="#8c8c8c" />
        <stop offset="1" stopColor="#707070" />
      </linearGradient>
    </defs>
    <path d="M170 257L342 224l79 102-7 15-207 53v-14z" fill="url(#back)" />
    <path d="M201 357l206-49 14 18-7 15-207 53v-14z" fill="url(#front)" />
    <g shapeRendering="crispEdges" fill="none">
      <path d="M170 256l172-33" stroke="#1f7a4c" />
      <path d="M170 257l172-33M175 271l176-35M285 236l66 107-4 15M201 357l206-49" stroke="#5fe3a1" />
      <path d="M207 380l214-54" stroke="#5cf0a5" strokeWidth="3" />
      <path d="M207 380l-37-123v14h4M207 379v15l207-53 7-15L342 224" stroke="#ffffff" strokeWidth="2" />
      <path d="M25 506v-9" stroke="#2fd12f" />
      <path d="M25 506l-13 2" stroke="#1616b4" />
      <path d="M25 506l4 4" stroke="#d81c1c" />
    </g>
    <g fontFamily="Open Sans" fontWeight="700" fontSize="10">
      <text x="22" y="494" fill="#2fd12f">y</text>
      <text x="8" y="509" fill="#1616b4">z</text>
      <text x="27" y="515" fill="#d81c1c">x</text>
      <text x="209" y="522" textAnchor="middle" fill="#ffffff">persp</text>
    </g>
  </Scene>
);

const UNIT = 145;
const ticks = Array.from({ length: 35 }, (_, i) => i - 16);
const tickText = (n: number) => (n % 10 === 0 ? `${n / 10}` : (n / 10).toFixed(1));
const UvScene = () => (
  <Scene viewBox="-228 -278 504 502" preserveAspectRatio="xMidYMid slice" role="img" aria-label="UV layout">
    <g shapeRendering="crispEdges" fill="none">
      {Array.from({ length: 60 }, (_, i) => i - 30).map((n) => (
        <path key={n} d={`M${Math.round(n * 14.5) - 0.5} -500V500M-500 ${Math.round(n * 14.55) + 0.5}H500`} stroke="#525252" />
      ))}
      <path d="M-145.500-500V500M144.500-500V500M-500-145.500H500M-500 145.500H500" stroke="#000000" />
      <path d="M-.5-500V500M-500 .5H500" stroke="#1414a8" />
    </g>
    <g fontFamily="Liberation Sans" fontSize="11" fill="#303030">
      {ticks.map((n) => (
        <text key={n} x={(n * UNIT) / 10 + (n < 0 ? 1 : 2)} y="-2">{tickText(n)}</text>
      ))}
      {ticks.filter((n) => n !== 0 && n > -16).map((n) => (
        <text key={n} x="1" y={Math.round((-n * UNIT) / 10) - 1}>{tickText(n)}</text>
      ))}
    </g>
    <g shapeRendering="crispEdges" fill="none">
      <path d="M-.5 0V-64" stroke="#16c816" strokeWidth="1" />
      <path d="M0 0H52" stroke="#b01818" strokeWidth="1" />
      <g stroke="#ffffff">
        <path d="M7-152L150-139 136 7-7-6zM23-151L9-4M133-140L121 6" strokeWidth="2" />
        <path d="M40-149L27-3M118-142L104 5M3-101L145-88" />
      </g>
    </g>
    <text x="271" y="217" textAnchor="end" fontFamily="Open Sans" fontWeight="700" fontSize="10" fill="#ffffff">
      (0/1) UV shells, (0/0) overlapping UVs, (0/0) reversed UVs
    </text>
  </Scene>
);

/* ---------- page ---------- */
const StTool = ({ n, on }: { n: string; on?: boolean }) => (
  <Tool $on={on} aria-label={n}><Svg width="22" height="22" viewBox="0 0 22 22">{st[n]}</Svg></Tool>
);
const UvTool = ({ n, on }: { n: string; on?: boolean }) => (
  <Tool $on={on} aria-label={n}><Svg width="22" height="22" viewBox="0 0 22 22">{uv[n]}</Svg></Tool>
);
const Box = ({ n, on }: { n: string; on?: boolean }) => (
  <Tool $w={36} $h={36} $on={on} aria-label={n}><Svg width="36" height="36" viewBox="0 0 36 36">{tb[n]}</Svg></Tool>
);
const KitTool = ({ n }: { n: string }) => (
  <Tool $w={37} $h={36} aria-label={n}><Svg width="34" height="34" viewBox="0 0 34 34">{kit[n]}</Svg></Tool>
);
const Menu = ({ items, pad, h, gap = 15, more }: { items: string[]; pad: number; h: number; gap?: number; more?: boolean }) => (
  <MenuList $pad={pad} $h={h} $gap={gap}>
    {items.map((m) => <MenuButton key={m}>{m}</MenuButton>)}
    {more && <MoreButton>»</MoreButton>}
  </MenuList>
);
const Constraint = ({ id, label, w, children }: { id: string; label: string; w: number; children?: React.ReactNode }) => (
  <FieldRow>
    <FieldLabel $w={w} htmlFor={id}>{label}</FieldLabel>
    <Tool $w={12} aria-label={`${label} options`}><Caret /></Tool>
    <input id={id} defaultValue="Off" />
    {children}
  </FieldRow>
);

export default function App() {
  return (
    <App_>
      <GlobalStyle />
      <Header>
        <Menu pad={9} h={18} items={["File", "Edit", "Create", "Select", "Modify", "Display", "Windows", "Mesh", "Edit Mesh", "Mesh Tools", "Mesh Display", "Curves", "Surfaces", "Deform", "UV", "Generate", "Cache", "Arnold", "Help"]} />
        <Workspace>
          <label htmlFor="workspace">Workspace :</label>
          <SelectBox $grow>
            <select id="workspace"><option>UV Editing*</option></select>
            <Caret w={9} c="#bdbdbd" />
          </SelectBox>
          <Svg width="13" height="17" viewBox="0 0 13 17">
            <path d="M3 8V4.500a3.500 3.500 0 0 1 7 0V8" fill="none" stroke={G} strokeWidth="2" />
            <path d="M1 7h11v9H1z" fill={G} />
            <path d="M6 10h1.500v4H6z" fill={D} />
          </Svg>
        </Workspace>
      </Header>

      <StatusLine>
        <Grip />
        <SelectBox>
          <select aria-label="Menu set"><option>Modeling</option></select>
          <Caret w={9} c="#bdbdbd" />
        </SelectBox>
        <Handle />
        {["file", "open", "save", "undo", "redo"].map((n) => <StTool key={n} n={n} />)}
        <Collapse />
        <Handle />
        <StTool n="selH" /><StTool n="selO" on /><StTool n="selC" />
        <Collapse />
        <Handle />
        {["magGrid", "magCurve", "magPoint", "magProj", "magPlane", "magLive"].map((n) => <StTool key={n} n={n} />)}
        <Tool $w={19} aria-label="Live surface menu"><Caret /></Tool>
        <LineField aria-label="Live surface" defaultValue="No Live Surface" />
        <Handle />
        <Tool $w={19} aria-label="Symmetry menu"><Caret /></Tool>
        <LineField aria-label="Symmetry" defaultValue="Symmetry: Off" />
        <Collapse />
        <Handle />
        {["rView", "rFrame", "rIpr", "rSet", "rBall", "rLayer", "rLight", "pause"].map((n) => <StTool key={n} n={n} />)}
        <Collapse />
        <Handle />
        <SignIn>
          <Svg width="17" height="17" viewBox="0 0 17 17">
            <path d="M8.500 1a3.500 4 0 0 1 3.500 4c0 2-1 3.500-2 4.500v1c4 1 5.500 2 6 5H1c.5-3 2-4 6-5v-1C6 8.500 5 7 5 5a3.500 4 0 0 1 3.500-4z" fill="#f0f4fa" stroke="#26324a" strokeWidth=".8" />
          </Svg>
          Sign In
        </SignIn>
        {["cubeTool", "human", "attr", "toolS", "layers"].map((n) => <StTool key={n} n={n} />)}
      </StatusLine>

      <Shelf>
        <Grip $h={60} />
        <ShelfSide>
          <Svg width="10" height="6" viewBox="0 0 10 6"><path d="M0 1.500h10M0 4.500h10" stroke="#9a9a9a" /></Svg>
          <Svg width="12" height="12" viewBox="0 0 12 12"><Gear x={6} y={6} r={3} c={G} /></Svg>
        </ShelfSide>
        <ShelfBody>
          <TabBar $h={18} $pad={1} $gap={3}>
            {["Curves / Surfaces", "Poly Modeling", "Sculpting", "Rigging", "Animation", "Rendering", "FX", "FX Caching", "Custom", "Arnold", "Bifrost", "MASH", "Motion Graphics", "XGen"].map((t) => (
              <Tab key={t} $on={t === "Poly Modeling"}>{t}</Tab>
            ))}
          </TabBar>
          <ShelfIcons>
            {shelfOrder.map((n, i) =>
              n === "|" ? <ShelfRule key={i} /> : (
                <Tool key={i} $w={35} $h={35} aria-label={n}>
                  <Svg width="32" height="32" viewBox="0 0 32 32">{shelf[n]}</Svg>
                </Tool>
              )
            )}
            <ShelfScroll>
              <Svg width="9" height="5" viewBox="0 0 9 5"><path d="M0 5h9L4.500 0z" fill={G} /></Svg>
              <Svg width="10" height="10" viewBox="0 0 10 10"><circle cx="5" cy="5" r="5" fill="#666666" /></Svg>
              <Caret w={9} c={G} />
            </ShelfScroll>
          </ShelfIcons>
        </ShelfBody>
      </Shelf>

      <Body>
        <ToolBox>
          <Grip $w={38} $h={8} />
          <Box n="select" on />
          {["lasso", "paint", "move", "rotate", "scale"].map((n) => <Box key={n} n={n} />)}
          <Slot />
          <Box n="soft" />
          <ToolRule />
          {["persp", "four", "two", "outliner"].map((n) => <Box key={n} n={n} />)}
          <Spacer />
          <Svg width="34" height="44" viewBox="0 0 34 44">
            <path d="M1 6h9l7 13 7-13h9v29H1z" fill="#138f95" />
            <path d="M1 6h9l10 24h-6L7 17z" fill="#9fd3da" />
            <path d="M33 6h-9l-8 16 4 8 5-11z" fill="#3db9bd" />
            <path d="M1 6v29l8-11V16z" fill="#1d7f86" />
            <path d="M26 16l7-10v29l-7-7z" fill="#0fa3a6" />
            <path d="M9 20l6 15H9zM26 17v18h-7z" fill={BG} />
          </Svg>
        </ToolBox>

        <Viewport>
          <Menu pad={8} h={19} gap={16} items={["View", "Shading", "Lighting", "Show", "Renderer", "Panels"]} />
          <ViewTools>
            {vpOrder.map((n, i) =>
              n === "|" ? <Handle key={i} w={10} s={14} /> : (
                <Tool key={i} $w={18} $h={18} $on={n === "shaded"} aria-label={n}>
                  <Svg width="18" height="18" viewBox="0 0 18 18">{vp[n]}</Svg>
                </Tool>
              )
            )}
          </ViewTools>
          <PerspScene />
        </Viewport>

        <Panel $f={508}>
          <TabBar $h={16} $pad={0}><Tab $on>UV Editor</Tab></TabBar>
          <Menu pad={10} h={21} more items={["Edit", "Create", "Select", "Cut/Sew", "Modify", "Tools", "View", "Image", "Textures", "UV Sets"]} />
          <UvTools>
            <UvTool n="wire" on /><UvTool n="fill" /><UvTool n="half" />
            <Rule />
            <UvTool n="border" on /><UvTool n="seam" />
            <Rule />
            <UvTool n="grid" on /><UvTool n="iso" />
            <Rule />
            <UvTool n="snap" />
            <HandleBox $w={4} />
            <UvTool n="checker" />
            <Tool $w={18} aria-label="Texture menu"><Caret /></Tool>
            <TextureField aria-label="Texture" placeholder="No texture found" />
            <UvTool n="rgb" /><UvTool n="image" />
            <Slider type="range" aria-label="Dim image" min="0" max="100" defaultValue="46" />
            <Collapse w={10} /><Collapse w={10} />
          </UvTools>
          <UvFoot><UvScene /></UvFoot>
        </Panel>

        <Kit $f={0}>
          <TabBar $h={16} $pad={1}>
            <Tab $on>UV Toolkit</Tab><Tab>Tool Settings</Tab><Tab>Attribute Editor</Tab>
          </TabBar>
          <Menu pad={11} h={21} items={["Options", "Help"]} />
          <KitBody>
            <KitScroll>
              <ModeRow>
                <KitTool n="uv" /><KitTool n="edge" /><KitTool n="face" />
                <i />
                <KitTool n="shell" /><KitTool n="object" />
              </ModeRow>
              <SelInfo>1 object selected</SelInfo>
              <Radio><input type="radio" name="pick" defaultChecked />Pick/Marquee</Radio>
              <Radio><input type="radio" name="pick" />Drag</Radio>
              <Radio $off><input type="radio" name="pick" disabled />Tweak/Marquee</Radio>
              <Constraints>
                <Constraint id="sym" label="Symmetry:" w={70}>
                  <Tool $w={28} aria-label="Symmetrize">
                    <Svg width="18" height="20" viewBox="0 0 18 20">
                      <path d="M1 2h7v15l-7-3zM10 2h7v12l-7 3z" fill={N} />
                      <path d="M1 9h7M10 9h7" stroke={D} />
                      <path d="M9 0v19" stroke={G} strokeDasharray="3 2" />
                    </Svg>
                  </Tool>
                </Constraint>
                <Constraint id="sel" label="Selection Constraint:" w={125} />
                <Constraint id="xf" label="Transform Constraint:" w={125} />
              </Constraints>
              <PushRow><Push>All</Push><Push>Clear</Push><Push>Inverse</Push></PushRow>
              <GrowRow><Grow rows={1} /><Grow rows={2} /><i /><Grow rows={2} out /><Grow rows={1} out /></GrowRow>
              <SubFolds>
                {["Pinning", "Select By Type", "Soft Selection"].map((t) => (
                  <Fold key={t} $sub><Tri /><span>{t}</span></Fold>
                ))}
              </SubFolds>
              <Fold><Tri /><span>Transform</span></Fold>
              <Fold><Tri open /><span>Create</span></Fold>
              <CreateGrid>
                {create.map(([t, g]) => (
                  <CreateButton key={t}>
                    <Svg width="20" height="20" viewBox="0 0 20 20">{g}<Check x={11} y={11} /></Svg>
                    {t}
                  </CreateButton>
                ))}
              </CreateGrid>
              <Fold><Tri /><span>Cut and Sew</span></Fold>
            </KitScroll>
            <ScrollTrack>
              <Svg width="9" height="5" viewBox="0 0 9 5"><path d="M0 5h9L4.500 0z" fill={G} /></Svg>
              <ScrollThumb />
              <ScrollRest />
              <Caret w={9} c={G} />
            </ScrollTrack>
          </KitBody>
          <DotRow />
          <Fold $wide><Tri /><span>UV Sets</span></Fold>
          <FoldFoot />
        </Kit>
      </Body>

      <Footer>
        <HelpLine>
          <Grip $h={26} />
          Select Tool: select an object
          <Spacer />
          <Svg width="13" height="26" viewBox="0 0 13 26">
            <path d="M0 12l13 13M0 16l9 9M0 20l5 5" stroke="#222222" strokeWidth="1.500" />
            <path d="M0 14l11 11M0 18l7 7" stroke="#777777" />
          </Svg>
        </HelpLine>
        <CommandLine>
          <Grip $h={26} />
          <MelButton>MEL</MelButton>
          <Command $f={198} aria-label="Command" />
          <CommandGap />
          <Command $f={346} aria-label="Command result" />
          <Tool $w={24} aria-label="Script editor">
            <Svg width="18" height="19" viewBox="0 0 18 19">
              <path d="M0 0h18v19H0z" fill={G} />
              <path d="M0 4h18" stroke={D} />
              <text x="9" y="15" textAnchor="middle" fontFamily="Liberation Mono" fontWeight="700" fontSize="9" fill={D}>{"{;}"}</text>
            </Svg>
          </Tool>
        </CommandLine>
        <Watermark href="#">https://blog.csdn.net/u012204304</Watermark>
      </Footer>
    </App_>
  );
}
